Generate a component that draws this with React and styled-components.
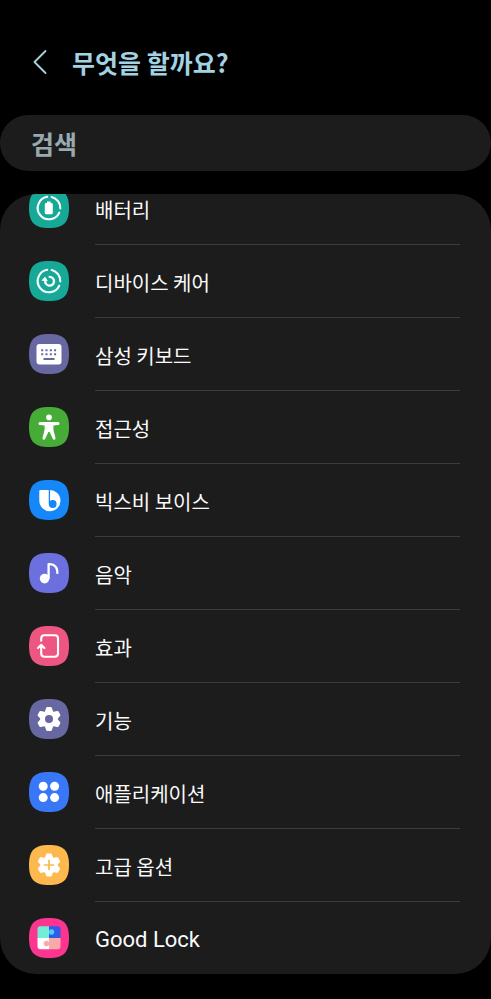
import React from "react";
import styled, { createGlobalStyle } from "styled-components";

const GlobalStyle = createGlobalStyle`
  * {
    box-sizing: border-box;
  }
  body {
    margin: 0;
    background: #000;
    color: #fafafa;
    font-family: "Noto Sans CJK KR", "Noto Sans", sans-serif;
  }
`;

const StyledPage = styled.main`
  display: flex;
  flex-direction: column;
  padding: 24px 0;
`;
const StyledHeader = styled.header`
  display: flex;
  align-items: center;
  gap: 16px;
  height: 76px;
  padding: 0 24px;
`;
const StyledBackButton = styled.button`
  display: flex;
  align-items: center;
  justify-content: center;
  width: 32px;
  height: 40px;
  padding: 0;
  border: none;
  background: none;
  color: #a9d5e2;
  cursor: pointer;
`;
const StyledTitle = styled.h1`
  margin: 0;
  color: #a3d2e2;
  font-size: 25px;
  font-weight: 700;
  line-height: 36px;
`;
const StyledSearch = styled.input`
  width: 100%;
  height: 56px;
  margin: 15px 0 23px;
  padding: 0 31px;
  border: none;
  border-radius: 28px;
  outline: none;
  background: #1c1c1c;
  color: #fafafa;
  font-family: inherit;
  font-size: 25px;
  font-weight: 700;
  &::placeholder {
    color: #98a9b0;
    opacity: 1;
  }
`;
const StyledPanel = styled.nav`
  overflow: hidden;
  border-radius: 36px;
  background: #1c1c1c;
`;
/* the list rests slightly scrolled under the top edge of the panel */
const StyledList = styled.ul`
  margin: -22px 0 0;
  padding: 0;
  list-style: none;
`;
const StyledRow = styled.button`
  display: flex;
  align-items: flex-start;
  gap: 26px;
  width: 100%;
  padding: 0 31px 0 29px;
  border: none;
  background: none;
  color: inherit;
  font-family: inherit;
  text-align: left;
  cursor: pointer;
`;
const StyledIcon = styled.svg`
  flex: none;
  width: 40px;
  height: 40px;
  margin-top: 16px;
  fill: none;
`;
const StyledLabel = styled.span`
  flex: 1;
  height: ${props => (props.$last ? 72 : 73)}px;
  padding-top: 4px;
  border-bottom: ${props => (props.$last ? "none" : "1px solid #3c3c3c")};
  font-family: ${props => (props.$latin ? "Roboto, sans-serif" : "inherit")};
  font-size: ${props => (props.$latin ? 22 : 20)}px;
  line-height: 68px;
`;

const Ring = () => (
  <g stroke="#fff" strokeWidth="2.1" strokeLinecap="round">
    <path d="M22.7 9A11.3 11.3 0 0 1 31.3 20.4" />
    <path d="M30.3 24.6A11.3 11.3 0 1 1 18.2 8.8" />
  </g>
);

const Gear = ({ size }) => (
  <g fill="#fff">
    <circle cx="20" cy="20" r="8.6" />
    {[0, 60, 120].map(angle => (
      <path
        key={angle}
        transform={`rotate(${angle} 20 20)`}
        d={`M18.3 ${20 - size}h3.4q1 0 1.2 1l1.5 4.4v${2 * size - 10.8}l-1.5 4.4q-.2 1-1.2 1h-3.4q-1 0-1.2-1l-1.5-4.4v-${2 * size - 10.8}l1.5-4.4q.2-1 1.2-1z`}
      />
    ))}
  </g>
);

const items = [
  {
    label: "배터리",
    color: "#17a998",
    drawing: (
      <>
        <Ring />
        <path fill="#fff" d="M18 13.4h3.6v1.6h.8q1.4 0 1.4 1.4v8.4q0 1.5-1.5 1.5h-5q-1.5 0-1.5-1.5v-8.4q0-1.4 1.4-1.4h.8z" />
      </>
    )
  },
  {
    label: "디바이스 케어",
    color: "#17a998",
    drawing: (
      <>
        <Ring />
        <path stroke="#fff" strokeWidth="2.3" strokeLinecap="round" d="M16.3 19.4A4.4 4.4 0 1 0 20.6 15.8" />
        <path fill="#fff" stroke="#fff" strokeLinejoin="round" d="M13.2 19.3l2.8-3 2.2 3.2z" />
      </>
    )
  },
  {
    label: "삼성 키보드",
    color: "#6767a1",
    drawing: (
      <>
        <rect x="7.5" y="10" width="25" height="20.4" rx="3" fill="#fff" />
        <path
          stroke="#6767a1"
          strokeWidth="2"
          d="M12.2 16.3h2m2.3 0h2m2.3 0h2m2.3 0h2M12.2 20.2h2m2.3 0h2m2.3 0h2m2.3 0h2M14.5 25.1h11"
        />
      </>
    )
  },
  {
    label: "접근성",
    color: "#46ab37",
    drawing: (
      <>
        <circle cx="20" cy="10.4" r="2.8" fill="#fff" />
        <path
          fill="#fff"
          d="M11 15h18q1.5 0 1.5 1.5T29 18l-4.6.5v4.2l2.1 8.4q.2 1.3-1 1.6-1.3.2-1.7-1L20.6 25h-1.2l-3.2 6.7q-.5 1.2-1.8 1-1.1-.4-.9-1.6l2.1-8.4v-4.2L11 18q-1.5 0-1.5-1.5T11 15z"
        />
      </>
    )
  },
  {
    label: "빅스비 보이스",
    color: "#1587f8",
    drawing: (
      <>
        <path fill="#fff" d="M11.4 10h9.2A10.6 10.6 0 1 1 10.3 20.6V11.1q0-1.1 1.1-1.1z" />
        <circle cx="23.7" cy="24" r="3.9" fill="#1587f8" />
        <path stroke="#1587f8" strokeWidth="1.3" d="M20.4 9.5v14" />
      </>
    )
  },
  {
    label: "음악",
    color: "#6c70df",
    drawing: (
      <>
        <circle cx="15.6" cy="25.6" r="4.8" fill="#fff" />
        <path
          stroke="#fff"
          strokeWidth="2.3"
          strokeLinecap="round"
          strokeLinejoin="round"
          d="M19.6 25V11.2h1.4q6.8.6 7.3 7.2v1.6"
        />
      </>
    )
  },
  {
    label: "효과",
    color: "#ed5681",
    drawing: (
      <path
        stroke="#fff"
        strokeWidth="2.1"
        strokeLinecap="round"
        strokeLinejoin="round"
        d="M12.2 14.8v-2.3q0-3.2 3.2-3.2h10.4q3.2 0 3.2 3.2v15q0 3.2-3.2 3.2H15.4q-3.2 0-3.2-3.2v-8M9 22l3.2-3.2 3.2 3.2"
      />
    )
  },
  {
    label: "기능",
    color: "#6767a1",
    drawing: (
      <>
        <Gear size={12} />
        <circle cx="20" cy="20" r="4" fill="#6767a1" />
      </>
    )
  },
  {
    label: "애플리케이션",
    color: "#3878f8",
    drawing: (
      <g fill="#fff">
        <circle cx="14.2" cy="14.2" r="4.5" />
        <circle cx="25.6" cy="14.2" r="4.5" />
        <circle cx="14.2" cy="25.6" r="4.5" />
        <circle cx="25.6" cy="25.6" r="4.5" />
      </g>
    )
  },
  {
    label: "고급 옵션",
    color: "#fdb94d",
    drawing: (
      <>
        <Gear size={11.6} />
        <path stroke="#fdb94d" strokeWidth="1.7" d="M20 14.8v10.4M14.8 20h10.4" />
      </>
    )
  },
  {
    label: "Good Lock",
    latin: true,
    color: "#fc3690",
    drawing: (
      <>
        <path fill="#73eed4" d="M20 8.2h-8.5q-3 0-3 3V20H20z" />
        <path fill="#2d5bea" d="M20 8.2h8.5q3 0 3 3V20H20z" />
        <path fill="#fff" d="M20 31.2h-8.5q-3 0-3-3V20H20z" />
        <path fill="#f9aaa8" d="M20 31.2h8.5q3 0 3-3V20H20z" />
        <path fill="#56c8f8" d="M20 12.8a2.8 2.8 0 1 1 0 2.4z" />
        <path fill="#f9aaa8" d="M20 24.4a2.8 2.8 0 1 0 0 2.4z" />
      </>
    )
  }
];

const SettingsRow = ({ item, last }) => (
  <li>
    <StyledRow type="button">
      <StyledIcon viewBox="0 0 40 40" aria-hidden="true">
        <path
          fill={item.color}
          d="M20 0C34.5 0 40 5.5 40 20S34.5 40 20 40 0 34.5 0 20 5.5 0 20 0z"
        />
        {item.drawing}
      </StyledIcon>
      <StyledLabel $last={last} $latin={item.latin}>
        {item.label}
      </StyledLabel>
    </StyledRow>
  </li>
);

const App = () => (
  <>
    <GlobalStyle />
    <StyledPage>
      <StyledHeader>
        <StyledBackButton type="button" aria-label="뒤로">
          <svg width="16" height="26" viewBox="0 0 16 26" fill="none">
            <path
              d="M13.5 2L2.5 13l11 11"
              stroke="currentColor"
              strokeWidth="1.8"
              strokeLinecap="round"
              strokeLinejoin="round"
            />
          </svg>
        </StyledBackButton>
        <StyledTitle>무엇을 할까요?</StyledTitle>
      </StyledHeader>
      <StyledSearch type="search" placeholder="검색" aria-label="검색" />
      <StyledPanel>
        <StyledList>
          {items.map((item, index) => (
            <SettingsRow
              key={item.label}
              item={item}
              last={index === items.length - 1}
            />
          ))}
        </StyledList>
      </StyledPanel>
    </StyledPage>
  </>
);

export default App;
